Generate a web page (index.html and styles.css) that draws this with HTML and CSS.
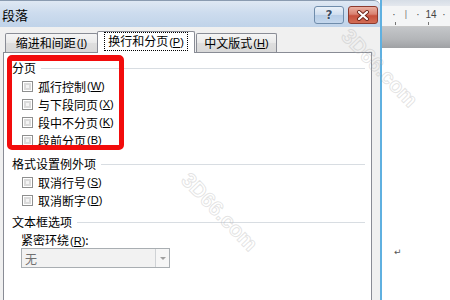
FILE: index.html
```html
<!DOCTYPE html>
<html lang="zh-CN">
<head>
    <meta charset="UTF-8">
    <title>段落</title>
    <link rel="stylesheet" href="styles.css">
</head>
<body>
<div class="screen">

    <!-- Paragraph dialog -->
    <div class="dialog">
        <div class="titlebar">
            <span class="title">段落</span>
            <div class="caption-btns">
                <span class="cap-btn help">?</span>
                <span class="cap-btn close">
                    <svg width="14" height="11" viewBox="0 0 14 11">
                        <path d="M3 2 L11 9 M11 2 L3 9" stroke="#6b2418" stroke-width="4" stroke-linecap="round"/>
                        <path d="M3 2 L11 9 M11 2 L3 9" stroke="#fff" stroke-width="2.2" stroke-linecap="round"/>
                    </svg>
                </span>
            </div>
        </div>

        <div class="dialog-body">
            <div class="tabs">
                <div class="tab tab-indent">缩进和间距<span class="key">(<u>I</u>)</span></div>
                <div class="tab tab-active"><span class="focus">换行和分页<span class="key">(<u>P</u>)</span></span></div>
                <div class="tab tab-asian">中文版式<span class="key">(<u>H</u>)</span></div>
            </div>

            <div class="panel">
                <div class="group-title"><span>分页</span></div>
                <div class="check"><span class="box"></span>孤行控制<span class="key">(<u>W</u>)</span></div>
                <div class="check"><span class="box"></span>与下段同页<span class="key">(<u>X</u>)</span></div>
                <div class="check"><span class="box"></span>段中不分页<span class="key">(<u>K</u>)</span></div>
                <div class="check"><span class="box"></span>段前分页<span class="key">(<u>B</u>)</span></div>

                <div class="group-title group-exceptions"><span>格式设置例外项</span></div>
                <div class="check"><span class="box"></span>取消行号<span class="key">(<u>S</u>)</span></div>
                <div class="check"><span class="box"></span>取消断字<span class="key">(<u>D</u>)</span></div>

                <div class="group-title group-textbox"><span>文本框选项</span></div>
                <div class="field-label">紧密环绕<span class="key">(<u>R</u>)</span>:</div>
                <div class="select">
                    <span class="select-value">无</span>
                    <span class="select-arrow"></span>
                </div>
            </div>
        </div>
    </div>

    <!-- Word document behind the dialog -->
    <div class="doc">
        <div class="ruler-top"></div>
        <div class="ruler">
            <div class="ruler-row">
                <span class="mark">·</span><span class="mark tick">|</span><span class="mark">·</span><span class="mark num">14</span><span class="mark">·</span>
            </div>
            <div class="ruler-ticks">
                <span class="small-tick"></span><span class="small-tick"></span>
            </div>
        </div>
        <div class="toolbar-shade"></div>
        <div class="page"><span class="para-mark">↵</span></div>
    </div>

    <!-- Annotation and watermarks drawn over the screenshot -->
    <div class="highlight"></div>
    <div class="watermark wm-center">3D66.com</div>
    <div class="watermark wm-top">3D66.com</div>
</div>
</body>
</html>
```

FILE: styles.css
```css
/* Global */
* {
    margin: 0;
    padding: 0;
    box-sizing: border-box;
}

body {
    width: 450px;
    height: 300px;
    overflow: hidden;
    background: #ffffff;
    font-family: "Noto Sans CJK SC", "Liberation Sans", sans-serif;
    font-size: 12px;
    color: #000;
}

.screen {
    position: relative;
    display: flex;
    width: 450px;
    height: 300px;
    overflow: hidden;
}

/* Dialog frame */
.dialog {
    width: 386px;
    height: 300px;
    border-right: 2px solid #5fb0e0;
    display: flex;
    flex-direction: column;
}

.titlebar {
    height: 27px;
    display: flex;
    align-items: center;
    justify-content: space-between;
    padding-left: 2px;
    border-top: 1px solid #8a9bb0;
    border-top-right-radius: 6px;
    background: linear-gradient(#dfe8f3, #cddcee 45%, #c0d3e9);
}

.title {
    font-size: 13px;
    line-height: 16px;
    margin-top: 1px;
}

.caption-btns {
    display: flex;
    gap: 4px;
    margin-right: 2px;
    margin-top: 2px;
}

.cap-btn {
    width: 30px;
    height: 18px;
    border-radius: 3px;
    display: flex;
    align-items: center;
    justify-content: center;
}

.help {
    border: 1px solid #6f8cab;
    background: linear-gradient(#eaf1f9, #d0deef 48%, #b7cde6 52%, #c4d7ed);
    font-family: "DejaVu Sans", sans-serif;
    font-weight: bold;
    font-size: 12px;
    color: #3d5068;
    text-shadow: 0 0 1px #fff, 0 0 1px #fff;
}

.close {
    border: 1px solid #8d3a2e;
    background: linear-gradient(#eab0a2, #d98170 45%, #c7503c 55%, #d26d55);
}

/* Dialog body */
.dialog-body {
    flex: 1;
    background: #f0f0f0;
    padding: 0 8px 0 3px;
    display: flex;
    flex-direction: column;
}

.tabs {
    height: 25px;
    display: flex;
    align-items: flex-end;
    padding-left: 2px;
}

.tab {
    height: 19px;
    border: 1px solid #898c95;
    border-bottom: none;
    border-radius: 2px 2px 0 0;
    background: linear-gradient(#f5f5f5, #e9e9e9 50%, #dedede 51%, #d9d9d9);
    display: flex;
    align-items: center;
    justify-content: center;
    line-height: 16px;
}

.tab-indent {
    width: 93px;
}

.tab-active {
    width: 98px;
    height: 22px;
    margin-left: -1px;
    margin-bottom: -1px;
    background: #ffffff;
    position: relative;
    z-index: 1;
    padding-bottom: 2px;
}

.tab-asian {
    width: 81px;
    margin-left: 1px;
}

.focus {
    outline: 1px dotted #000;
    outline-offset: 1px;
    padding: 0 2px;
    line-height: 14px;
}

.key {
    font-family: "Liberation Sans", sans-serif;
    font-size: 11px;
    margin-left: 1px;
}

.key u {
    text-decoration-thickness: 1px;
    text-underline-offset: 1px;
}

/* Tab page */
.panel {
    flex: 1;
    background: #ffffff;
    border: 1px solid #898c95;
    border-bottom: none;
    padding: 6px 6px 0 8px;
}

.group-title {
    display: flex;
    align-items: center;
    height: 18px;
    line-height: 18px;
}

.group-title::after {
    content: "";
    flex: 1;
    height: 1px;
    margin-left: 5px;
    background: #d8dde2;
}

.group-exceptions {
    margin-top: 6px;
}

.group-textbox {
    margin-top: 4px;
}

.check {
    display: flex;
    align-items: center;
    height: 18px;
    padding-left: 10px;
}

.box {
    width: 11px;
    height: 11px;
    margin-right: 5px;
    border: 1px solid #8e8f8f;
    background: #f4f4f4;
    box-shadow: inset 0 0 0 1px #fff, inset 0 0 0 3px #dadada;
}

.field-label {
    height: 18px;
    line-height: 18px;
    padding-left: 9px;
    color: #000;
}

.select {
    width: 149px;
    height: 20px;
    margin-left: 9px;
    margin-top: -1px;
    border: 1px solid #a9aeb2;
    background: #f2f2f2;
    display: flex;
    align-items: center;
}

.select-value {
    flex: 1;
    padding-left: 3px;
    color: #707070;
}

.select-arrow {
    width: 14px;
    height: 18px;
    border-left: 1px solid #cfd2d5;
    background: #f6f6f6;
    display: flex;
    align-items: center;
    justify-content: center;
}

.select-arrow::before {
    content: "";
    border-left: 3px solid transparent;
    border-right: 3px solid transparent;
    border-top: 3px solid #a0a0a0;
}

/* Document behind */
.doc {
    flex: 1;
    display: flex;
    flex-direction: column;
}

.ruler-top {
    height: 6px;
    background: linear-gradient(#d6dde6, #e4e8ee);
}

.ruler {
    height: 21px;
    background: #f4f5f6;
    border-bottom: 1px solid #c9c9c9;
    padding: 3px 0 0 6px;
    font-family: "Liberation Sans", sans-serif;
    font-size: 10px;
    color: #444;
}

.ruler-row {
    display: flex;
    height: 11px;
    line-height: 11px;
}

.ruler .mark {
    width: 12px;
    text-align: center;
}

.ruler .tick {
    color: #777;
    font-size: 9px;
}

.ruler .num {
    width: 14px;
}

.ruler-ticks {
    display: flex;
    gap: 32px;
    padding: 2px 0 0 7px;
}

.small-tick {
    width: 1px;
    height: 3px;
    background: #777;
}

.toolbar-shade {
    height: 21px;
    background: linear-gradient(#c4c6c9, #b3b5b8 60%, #9fa1a4);
}

.page {
    flex: 1;
    background: #ffffff;
    padding: 193px 0 0 12px;
}

.para-mark {
    font-family: "DejaVu Sans", sans-serif;
    font-size: 9px;
    color: #555;
}

/* Red annotation box */
.highlight {
    position: absolute;
    left: 7px;
    top: 55px;
    width: 117px;
    height: 95px;
    border: 5px solid #f20c0c;
    border-top-width: 6px;
    border-radius: 5px;
}

/* Watermarks */
.watermark {
    position: absolute;
    font-family: "Liberation Sans", sans-serif;
    font-size: 21px;
    font-weight: bold;
    color: transparent;
    -webkit-text-stroke: 1px rgba(175, 175, 175, 0.35);
    transform: rotate(46deg);
    transform-origin: center;
    white-space: nowrap;
}

.wm-center {
    left: 170px;
    top: 200px;
}

.wm-top {
    left: 330px;
    top: 56px;
}
```
